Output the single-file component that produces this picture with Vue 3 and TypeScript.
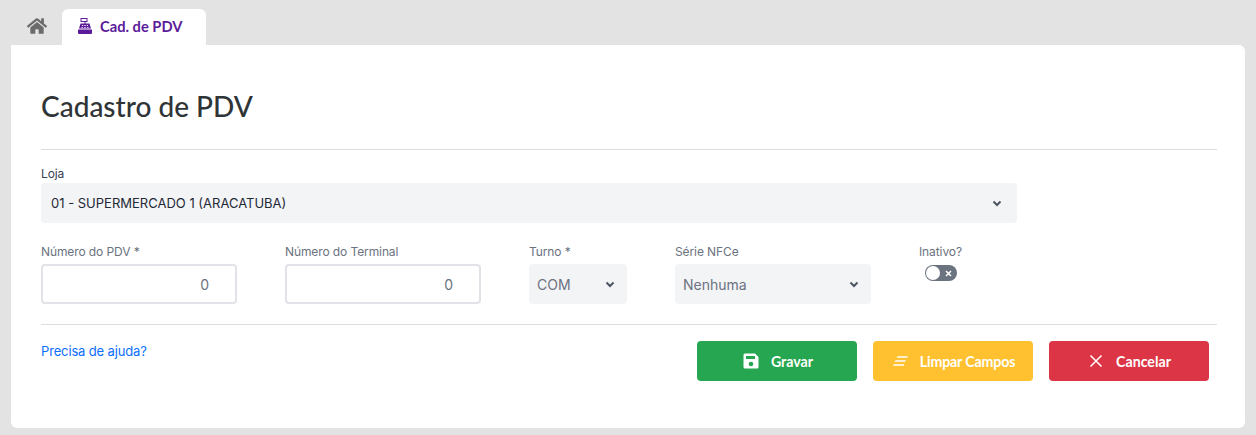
<script setup lang="ts">
import { ref } from 'vue'

const loja = ref('01')
const pdv = ref(0)
const terminal = ref(0)
const turno = ref('COM')
const serie = ref('Nenhuma')
const inativo = ref(false)
</script>

<template>
  <div class="page">
    <nav class="tabs">
      <a class="tab-home" href="#" title="Início">
        <svg width="20" height="18" viewBox="0 0 576 512" fill="currentColor">
          <path d="M280.37 148.26L96 300.11V464a16 16 0 0 0 16 16l112.06-.29a16 16 0 0 0 15.92-16V368a16 16 0 0 1 16-16h64a16 16 0 0 1 16 16v95.64a16 16 0 0 0 16 16.05L464 480a16 16 0 0 0 16-16V300L295.67 148.26a12.19 12.19 0 0 0-15.3 0zM571.6 251.47L488 182.56V44.05a12 12 0 0 0-12-12h-56a12 12 0 0 0-12 12v72.61L318.47 43a48 48 0 0 0-61 0L4.34 251.47a12 12 0 0 0-1.6 16.9l25.5 31A12 12 0 0 0 45.15 301l235.22-193.74a12.19 12.19 0 0 1 15.3 0L530.9 301a12 12 0 0 0 16.9-1.6l25.5-31a12 12 0 0 0-1.7-16.93z" />
        </svg>
      </a>
      <div class="tab-active">
        <svg width="14" height="16" viewBox="0 0 14 16" fill="currentColor">
          <path d="M2.500 0h7v4H7.500v1.500H11.500L13 10.500H1L2.500 5.500h4V4h-4z" />
          <path d="M0 11.500h14V15a1 1 0 0 1-1 1H1a1 1 0 0 1-1-1z" />
          <path fill="#fff" d="M3.500 1h5v2h-5zM4 7h1.200v1H4zM6.400 7h1.200v1H6.400zM8.800 7H10v1H8.800zM3.500 9h1.200v1H3.500zM6.400 9h1.200v1H6.400zM9.300 9h1.200v1H9.300z" />
        </svg>
        <span>Cad. de PDV</span>
      </div>
    </nav>

    <main class="card">
      <h1 class="title">Cadastro de PDV</h1>
      <hr class="divider" />

      <form class="form" @submit.prevent>
        <div class="field field--loja">
          <label class="label label--dark">Loja</label>
          <div class="select-box">
            <select v-model="loja" class="select select--dark">
              <option value="01">01 - SUPERMERCADO 1 (ARACATUBA)</option>
            </select>
            <svg class="chevron" width="10" height="7" viewBox="0 0 10 7"><path d="M1.500 1.500 5 5l3.500-3.500" /></svg>
          </div>
        </div>

        <div class="row">
          <div class="field field--num">
            <label class="label">Número do PDV *</label>
            <input v-model.number="pdv" class="input" type="text" />
          </div>
          <div class="field field--num">
            <label class="label">Número do Terminal</label>
            <input v-model.number="terminal" class="input" type="text" />
          </div>
          <div class="field field--turno">
            <label class="label">Turno *</label>
            <div class="select-box select-box--sm">
              <select v-model="turno" class="select select--sm">
                <option>COM</option>
              </select>
              <svg class="chevron" width="10" height="7" viewBox="0 0 10 7"><path d="M1.500 1.500 5 5l3.500-3.500" /></svg>
            </div>
          </div>
          <div class="field field--num">
            <label class="label">Série NFCe</label>
            <div class="select-box select-box--sm">
              <select v-model="serie" class="select select--sm">
                <option>Nenhuma</option>
              </select>
              <svg class="chevron" width="10" height="7" viewBox="0 0 10 7"><path d="M1.500 1.500 5 5l3.500-3.500" /></svg>
            </div>
          </div>
          <div class="field">
            <label class="label">Inativo?</label>
            <button class="switch" type="button" @click="inativo = !inativo">
              <span class="switch__knob"></span>
              <svg width="7" height="7" viewBox="0 0 7 7"><path d="M1 1l5 5M6 1 1 6" /></svg>
            </button>
          </div>
        </div>
      </form>

      <hr class="divider divider--footer" />

      <footer class="footer">
        <a class="help" href="#">Precisa de ajuda?</a>
        <div class="actions">
          <button class="btn btn--green" type="button">
            <svg width="16" height="16" viewBox="0 0 16 16">
              <path fill="#fff" d="M2 .5h10L15.500 4v10a1.500 1.500 0 0 1-1.500 1.500H2A1.500 1.500 0 0 1 .5 14V2A1.500 1.500 0 0 1 2 .5z" />
              <path fill="#26a650" d="M3 3h9v3H3z" />
              <circle fill="#26a650" cx="8" cy="11" r="2.300" />
            </svg>
            Gravar
          </button>
          <button class="btn btn--yellow" type="button">
            <svg width="15" height="10" viewBox="0 0 15 10" fill="#fff">
              <path d="M4.500.2H15l-.9 1.600H3.600zM2.500 4.200H13l-.9 1.600H1.600zM.9 8.200h10.500l-.9 1.600H0z" />
            </svg>
            Limpar Campos
          </button>
          <button class="btn btn--red" type="button">
            <svg width="14" height="14" viewBox="0 0 14 14" stroke="#fff" stroke-width="1.500" fill="none">
              <path d="M1.500 1.500l11 11M12.500 1.500l-11 11" />
            </svg>
            Cancelar
          </button>
        </div>
      </footer>
    </main>
  </div>
</template>

<style>
html,
body {
  background: #e3e3e3;
}
</style>

<style scoped>
.page {
  padding: 0 11px 7px;
  font-family: Inter, "Noto Sans", sans-serif;
  font-size: 14px;
  color: #374151;
}

.tabs {
  display: flex;
  height: 45px;
  padding-top: 9px;
  box-sizing: border-box;
}

.tab-home {
  width: 51px;
  display: flex;
  align-items: center;
  justify-content: center;
  color: #6b6b6b;
  padding-bottom: 2px;
  box-sizing: border-box;
}

.tab-active {
  width: 144px;
  box-sizing: border-box;
  padding: 0 0 2px 16px;
  display: flex;
  align-items: center;
  gap: 8px;
  background: #fff;
  border-radius: 6px 6px 0 0;
  color: #5b1a9a;
  font-family: Lato, sans-serif;
  font-weight: 700;
  font-size: 14.700px;
}

.card {
  height: 383px;
  box-sizing: border-box;
  padding: 0 28px 0 30px;
  background: #fff;
  border-radius: 0 6px 6px 6px;
}

.title {
  margin: 0;
  padding-top: 44px;
  height: 104px;
  box-sizing: border-box;
  font-family: Lato, sans-serif;
  font-weight: 500;
  font-size: 28px;
  line-height: 34px;
  color: #2f3437;
}

.divider {
  margin: 0;
  border: 0;
  border-top: 1px solid #dedede;
}

.form {
  padding-top: 15px;
}

.field {
  display: flex;
  flex-direction: column;
}

.field--loja {
  width: 976px;
}

.field--num {
  width: 196px;
}

.field--turno {
  width: 98px;
}

.label {
  font-size: 12px;
  line-height: 18px;
  color: #6b7280;
  font-weight: 400;
  letter-spacing: -0.1px;
}

.label--dark {
  color: #374151;
}

.row .label {
  margin-bottom: 3px;
}

.select-box {
  height: 40px;
  display: flex;
  align-items: center;
  padding-right: 15px;
  background: #f3f4f6;
  border-radius: 4px;
}

.select-box--sm {
  padding-right: 12px;
}

.select {
  flex: 1;
  min-width: 0;
  height: 100%;
  padding: 0 0 0 10px;
  border: 0;
  outline: 0;
  appearance: none;
  background: transparent;
  font: inherit;
  font-size: 13px;
  color: #6b7280;
}

.select--sm {
  padding-left: 8px;
  font-size: 14px;
}

.select--dark {
  color: #1f2937;
}

.chevron {
  fill: none;
  stroke: #4b5563;
  stroke-width: 2;
}

.row {
  display: flex;
  gap: 48px;
  margin-top: 20px;
}

.input {
  width: 100%;
  height: 40px;
  box-sizing: border-box;
  padding: 0 26px 0 10px;
  border: 2px solid #e2e2e8;
  border-radius: 4px;
  outline: 0;
  text-align: right;
  font: inherit;
  color: #6b7280;
}

.switch {
  display: flex;
  align-items: center;
  justify-content: space-between;
  width: 32px;
  height: 16px;
  margin: 1px 0 0 6px;
  padding: 0 5px 0 1px;
  border: 0;
  border-radius: 8px;
  background: #6b7280;
}

.switch__knob {
  width: 14px;
  height: 14px;
  border-radius: 50%;
  background: #fff;
}

.switch svg {
  fill: none;
  stroke: #fff;
  stroke-width: 1.500;
}

.divider--footer {
  margin-top: 20px;
}

.footer {
  display: flex;
  justify-content: space-between;
  padding: 16px 8px 0 0;
}

.help {
  font-size: 13px;
  line-height: 20px;
  letter-spacing: -0.15px;
  color: #0d6efd;
  text-decoration: none;
}

.actions {
  display: flex;
  gap: 16px;
}

.btn {
  width: 160px;
  height: 40px;
  display: flex;
  align-items: center;
  justify-content: center;
  gap: 12px;
  padding: 0 0 0 2px;
  border: 0;
  border-radius: 4px;
  color: #fff;
  font-family: Lato, sans-serif;
  font-weight: 700;
  font-size: 14.200px;
}

.btn--green {
  background: #26a650;
}

.btn--yellow {
  background: #ffc130;
  letter-spacing: -0.15px;
}

.btn--red {
  background: #dc3545;
  gap: 13px;
}
</style>
